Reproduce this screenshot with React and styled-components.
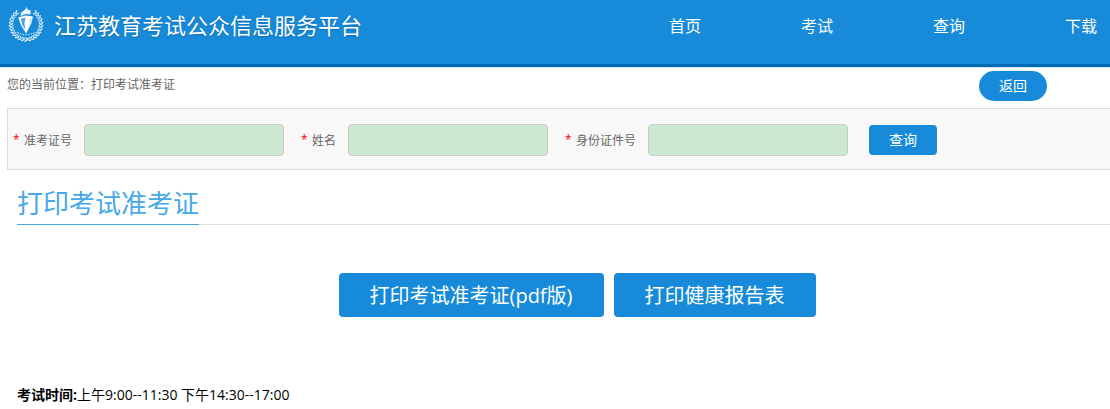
import React, { useState } from 'react';
import styled, { createGlobalStyle } from 'styled-components';

const GlobalStyle = createGlobalStyle`
    *{
        box-sizing:border-box;
    }
    body{
        margin:0;
        background-color:#fff;
        color:#000;
        font-family:"Open Sans","Noto Sans CJK SC",sans-serif;
        font-size:14px;
    }
    button,input{
        font-family:inherit;
    }
`

const Header = styled.header`
    display:flex;
    align-items:flex-start;
    justify-content:space-between;
    height:67px;
    padding:0 13px 0 8px;
    background-color:#178bda;
    border-bottom:3px solid #006cb5;
    box-shadow:0 1px 0 #d5e3ee;
`

const Brand = styled.a`
    display:flex;
    align-items:center;
    gap:10px;
    height:48px;
    color:#fff;
    font-size:22px;
    white-space:nowrap;
    text-decoration:none;
    text-shadow:0 1px 2px rgba(0,60,120,0.4);
`

const Nav = styled.nav`
    display:flex;
    gap:100px;
    a{
        color:#fff;
        font-size:16px;
        line-height:52px;
        white-space:nowrap;
        text-decoration:none;
    }
`

const Location = styled.div`
    display:flex;
    align-items:flex-start;
    justify-content:space-between;
    height:41px;
    padding:4px 63px 0 7px;
    p{
        margin:0;
        color:#666;
        font-size:12px;
        line-height:28px;
    }
`

const Button = styled.button`
    height:${(props) => (props.$large ? "44px" : "30px")};
    padding:${(props) => (props.$large ? "2px 31px 0" : "0 20px")};
    border:0;
    border-radius:${(props) => (props.$round ? "15px" : "4px")};
    background-color:#178bda;
    color:#fff;
    font-size:${(props) => (props.$large ? "20px" : "14px")};
    line-height:30px;
    white-space:nowrap;
    cursor:pointer;
    &:hover{
        background-color:#006cb5;
    }
`

const SearchForm = styled.form`
    display:flex;
    align-items:center;
    gap:17px;
    margin-left:7px;
    padding:15px 5px 13px;
    border:1px solid #ddd;
    border-right:0;
    background-color:#f8f8f8;
    ${Button}{
        margin-left:4px;
    }
`

const Field = styled.div`
    display:flex;
    align-items:center;
    gap:12px;
    label{
        display:flex;
        gap:5px;
        color:#666;
        font-size:12px;
        white-space:nowrap;
    }
    span{
        color:#f00;
        width:6px;
    }
    input{
        width:200px;
        height:32px;
        padding:0 8px;
        border:1px solid #ccc;
        border-radius:4px;
        background-color:#cce8cf;
    }
`

const Main = styled.main`
    padding-left:17px;
`

const TitleBar = styled.div`
    display:flex;
    margin-top:14px;
    border-bottom:1px solid #ddd;
    h1{
        margin:0 0 -1px;
        padding-bottom:2px;
        border-bottom:1px solid #46a8e8;
        color:#46a8e8;
        font-size:26px;
        font-weight:400;
        line-height:38px;
    }
`

const Actions = styled.div`
    display:flex;
    justify-content:center;
    gap:10px;
    padding:48px 0 68px 27px;
`

const ExamTime = styled.p`
    margin:0;
    line-height:20px;
`

const fields = [
    {id:"ticket",title:"准考证号"},
    {id:"name",title:"姓名"},
    {id:"idcard",title:"身份证件号"},
];

const links = ["首页","考试","查询","下载"];

// laurel leaves run round both sides and leave the top open for the torch
const leaves = Array.from({length:25},(_,i)=>38+i*(284/24));

const Logo = () => (
    <svg width="36" height="36" viewBox="0 0 36 36" fill="none" aria-hidden="true">
        {leaves.map((angle)=>(
            <g key={angle} transform={`rotate(${angle} 18 18.5)`} stroke="#fff" strokeLinecap="round">
                <path d={angle<180 ? "M17 1.8L19.2 3.4" : "M19 1.8L16.8 3.4"} strokeWidth="1.4" opacity="0.85"/>
                <path d={angle<180 ? "M17 5.4L19 4.2" : "M19 5.4L17 4.2"} strokeWidth="1.2" opacity="0.75"/>
            </g>
        ))}
        <path d="M9.5 26.4Q18 31 26.5 26.4" stroke="#fff" strokeWidth="1.2" strokeDasharray="1.5 1.3" opacity="0.75"/>
        <path d="M13.4 6.2L17 3.8L18.6 0.8L19.4 3.2L22.6 4.6V8.4L17.6 8L12.4 10.2Z" fill="#fff" opacity="0.9"/>
        <path d="M10.2 11.6L17.5 9.6L25 10.6L23.4 17L18.2 27.6L13.2 19.6Z" fill="#fff"/>
        <path d="M12.8 12.8L17.6 11.8L16.4 17L17.2 23.6L14.4 19Z" fill="#178bda" opacity="0.8"/>
        <path d="M22.4 13.2L23.6 13L20.6 20.4Z" fill="#178bda" opacity="0.5"/>
    </svg>
)

const App = () => {
    const [values,setValues]=useState({ticket:"",name:"",idcard:""});

    const handleChange=(e)=>{
        setValues({...values,[e.target.id]:e.target.value})
    }

  return (
    <>
        <GlobalStyle/>
        <Header>
            <Brand href="#"><Logo/>江苏教育考试公众信息服务平台</Brand>
            <Nav>
                {links.map((item)=>(
                    <a href="#" key={item}>{item}</a>
                ))}
            </Nav>
        </Header>
        <Location>
            <p>您的当前位置：打印考试准考证</p>
            <Button type="button" $round>返回</Button>
        </Location>
        <SearchForm onSubmit={(e)=>e.preventDefault()}>
            {fields.map((item)=>(
                <Field key={item.id}>
                    <label htmlFor={item.id}><span>*</span>{item.title}</label>
                    <input id={item.id} value={values[item.id]} onChange={handleChange}/>
                </Field>
            ))}
            <Button type="submit">查询</Button>
        </SearchForm>
        <Main>
            <TitleBar><h1>打印考试准考证</h1></TitleBar>
            <Actions>
                <Button type="button" $large>打印考试准考证(pdf版)</Button>
                <Button type="button" $large>打印健康报告表</Button>
            </Actions>
            <ExamTime><b>考试时间:</b>上午9:00--11:30 下午14:30--17:00</ExamTime>
        </Main>
    </>
  )
}

export default App
